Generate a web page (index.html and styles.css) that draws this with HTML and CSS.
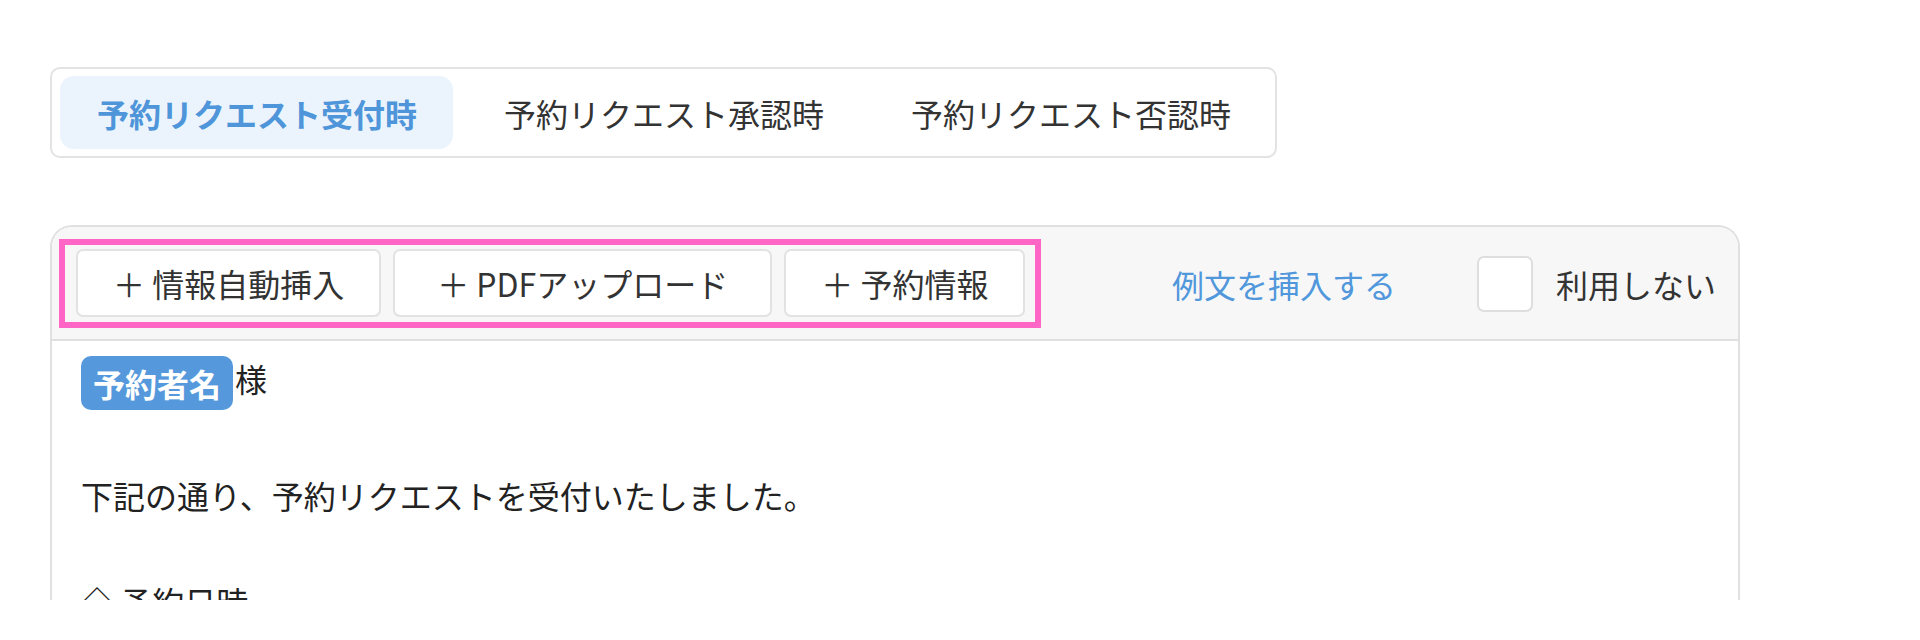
FILE: index.html
```html
<!DOCTYPE html>
<html lang="ja">
<head>
<meta charset="utf-8">
<title>メール設定</title>
<link rel="stylesheet" href="styles.css">
</head>
<body>
<div class="page">
  <div class="tabs">
    <div class="tab tab-active">予約リクエスト受付時</div>
    <div class="tab">予約リクエスト承認時</div>
    <div class="tab">予約リクエスト否認時</div>
  </div>

  <div class="panel">
    <div class="toolbar">
      <div class="highlight">
        <button class="btn">＋ 情報自動挿入</button>
        <button class="btn btn-wide">＋ PDFアップロード</button>
        <button class="btn">＋ 予約情報</button>
      </div>
      <div class="toolbar-right">
        <a class="sample-link">例文を挿入する</a>
        <label class="check">
          <span class="check-box"></span>
          <span class="check-label">利用しない</span>
        </label>
      </div>
    </div>
    <div class="body">
      <p class="line"><span class="badge">予約者名</span>様</p>
      <p class="line">&nbsp;</p>
      <p class="line">下記の通り、予約リクエストを受付いたしました。</p>
      <p class="line">&nbsp;</p>
      <p class="line line-section">◇ 予約日時</p>
    </div>
  </div>
</div>
</body>
</html>
```

FILE: styles.css
```css
* {
  box-sizing: border-box;
}

html, body {
  margin: 0;
  padding: 0;
  background: #ffffff;
}

body {
  font-family: "Noto Sans CJK JP", "Noto Sans", sans-serif;
  color: #333333;
  font-size: 32px;
  height: 640px;
  overflow: hidden;
}

.page {
  padding: 67px 0 0 50px;
}

.tabs {
  display: inline-flex;
  gap: 14px;
  padding: 7px 8px;
  border: 2px solid #e3e3e3;
  border-radius: 10px;
  background: #ffffff;
}

.tab {
  height: 73px;
  padding: 0 36px 0 37px;
  display: flex;
  align-items: center;
  font-size: 32px;
  line-height: 48px;
  color: #333333;
  border-radius: 14px;
  white-space: nowrap;
}

.tab-active {
  background: #ebf4fd;
  color: #4f95d9;
  font-weight: 700;
}

.panel {
  margin-top: 67px;
  width: 1690px;
  height: 375px;
  overflow: hidden;
  border: 2px solid #e0e0e0;
  border-bottom: none;
  border-radius: 22px 22px 0 0;
  background: #ffffff;
}

.toolbar {
  height: 114px;
  display: flex;
  align-items: center;
  padding: 1px 22px 0 7px;
  background: #f7f7f7;
  border-bottom: 2px solid #e0e0e0;
}

.highlight {
  display: flex;
  gap: 12px;
  padding: 4px 10px 5px 11px;
  border: 6px solid #ff66c6;
}

.btn {
  height: 68px;
  padding: 0 35px;
  display: flex;
  align-items: center;
  font-family: inherit;
  font-size: 32px;
  color: #333333;
  background: #ffffff;
  border: 2px solid #e2e2e2;
  border-radius: 7px;
  white-space: nowrap;
}

.btn-wide {
  padding: 0 42px;
}

.toolbar-right {
  margin-left: auto;
  display: flex;
  align-items: center;
  gap: 81px;
}

.sample-link {
  color: #5197dc;
  font-size: 32px;
  line-height: 48px;
}

.check {
  display: flex;
  align-items: center;
  gap: 23px;
}

.check-box {
  width: 56px;
  height: 56px;
  background: #ffffff;
  border: 2px solid #dedede;
  border-radius: 7px;
}

.check-label {
  font-size: 32px;
  line-height: 48px;
  color: #333333;
}

.body {
  padding: 9px 30px 0 29px;
}

.line {
  margin: 0;
  font-size: 32px;
  line-height: 57px;
  color: #222222;
  white-space: nowrap;
}

.line-section {
  margin-top: -8px;
}

.badge {
  display: inline-block;
  height: 54px;
  line-height: 54px;
  padding: 0 12px;
  margin-right: 2px;
  background: #5599dc;
  color: #ffffff;
  font-weight: 700;
  border-radius: 10px;
  vertical-align: middle;
}
```
